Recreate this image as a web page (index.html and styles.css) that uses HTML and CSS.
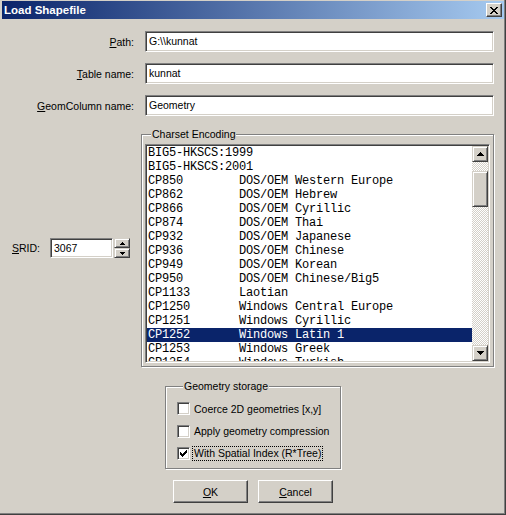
FILE: index.html
```html
<!DOCTYPE html>
<html>
<head>
<meta charset="utf-8">
<link rel="stylesheet" href="styles.css">
</head>
<body>
<div class="window">
  <div class="titlebar">
    <span class="title">Load Shapefile</span>
    <div class="close">
      <svg width="8" height="7" viewBox="0 0 8 7" shape-rendering="crispEdges"><path d="M0 0h2v1H0zM6 0h2v1H6zM1 1h2v1H1zM5 1h2v1H5zM2 2h4v1H2zM3 3h2v1H3zM2 4h4v1H2zM1 5h2v1H1zM5 5h2v1H5zM0 6h2v1H0zM6 6h2v1H6z" fill="#000"/></svg>
    </div>
  </div>

  <div class="fields">
    <div class="field"><span class="lbl"><u>P</u>ath:</span><div class="textbox">G:\\kunnat</div></div>
    <div class="field"><span class="lbl"><u>T</u>able name:</span><div class="textbox">kunnat</div></div>
    <div class="field"><span class="lbl"><u>G</u>eomColumn name:</span><div class="textbox">Geometry</div></div>
  </div>

  <div class="middle">
    <div class="srid">
      <span class="srid-lbl"><u>S</u>RID:</span>
      <div class="textbox srid-box">3067</div>
      <div class="spin">
        <div class="bevel spin-btn"><svg width="5" height="3" viewBox="0 0 5 3" shape-rendering="crispEdges"><path d="M2 0h1v1H2zM1 1h3v1H1zM0 2h5v1H0z"/></svg></div>
        <div class="bevel spin-btn"><svg width="5" height="3" viewBox="0 0 5 3" shape-rendering="crispEdges"><path d="M0 0h5v1H0zM1 1h3v1H1zM2 2h1v1H2z"/></svg></div>
      </div>
    </div>

    <div class="group charset">
      <div class="group-title">Charset Encoding</div>
      <div class="listbox">
        <div class="items">
          <div class="item">BIG5-HKSCS:1999</div>
          <div class="item">BIG5-HKSCS:2001</div>
          <div class="item">CP850        DOS/OEM Western Europe</div>
          <div class="item">CP862        DOS/OEM Hebrew</div>
          <div class="item">CP866        DOS/OEM Cyrillic</div>
          <div class="item">CP874        DOS/OEM Thai</div>
          <div class="item">CP932        DOS/OEM Japanese</div>
          <div class="item">CP936        DOS/OEM Chinese</div>
          <div class="item">CP949        DOS/OEM Korean</div>
          <div class="item">CP950        DOS/OEM Chinese/Big5</div>
          <div class="item">CP1133       Laotian</div>
          <div class="item">CP1250       Windows Central Europe</div>
          <div class="item">CP1251       Windows Cyrillic</div>
          <div class="item sel">CP1252       Windows Latin 1</div>
          <div class="item">CP1253       Windows Greek</div>
          <div class="item">CP1254       Windows Turkish</div>
        </div>
        <div class="vscroll">
          <div class="bevel sb-btn"><svg width="7" height="4" viewBox="0 0 7 4" shape-rendering="crispEdges"><path d="M3 0h1v1H3zM2 1h3v1H2zM1 2h5v1H1zM0 3h7v1H0z"/></svg></div>
          <div class="track"><div class="bevel thumb"></div></div>
          <div class="bevel sb-btn"><svg width="7" height="4" viewBox="0 0 7 4" shape-rendering="crispEdges"><path d="M0 0h7v1H0zM1 1h5v1H1zM2 2h3v1H2zM3 3h1v1H3z"/></svg></div>
        </div>
      </div>
    </div>
  </div>

  <div class="group storage">
    <div class="group-title">Geometry storage</div>
    <div class="checks">
      <div class="check"><div class="cbox"></div><span class="cl">Coerce 2D geometries [x,y]</span></div>
      <div class="check"><div class="cbox"></div><span class="cl">Apply geometry compression</span></div>
      <div class="check"><div class="cbox"><svg width="7" height="7" viewBox="0 0 7 7" shape-rendering="crispEdges"><path d="M0 2h1v3H0zM1 3h1v3H1zM2 4h1v3H2zM3 3h1v3H3zM4 2h1v3H4zM5 1h1v3H5zM6 0h1v3H6z"/></svg></div><span class="cl focus">With Spatial Index (R*Tree)</span></div>
    </div>
  </div>

  <div class="buttons">
    <div class="btn"><u>O</u>K</div>
    <div class="btn"><u>C</u>ancel</div>
  </div>
</div>
</body>
</html>
```

FILE: styles.css
```css
* { box-sizing: border-box; }
html, body { margin: 0; padding: 0; }
body {
  width: 506px;
  height: 515px;
  overflow: hidden;
  background: #d4d0c8;
  font-family: "Liberation Sans", Arial, sans-serif;
  font-size: 10.5px;
  color: #000;
}
u { text-decoration: underline; text-underline-offset: 1px; }

.window {
  width: 506px;
  height: 515px;
  padding: 1px 2px 0;
  display: flex;
  flex-direction: column;
  box-shadow: inset -1px -1px #404040, inset -2px -2px #808080;
}

.titlebar {
  height: 18px;
  flex: none;
  display: flex;
  align-items: center;
  justify-content: space-between;
  padding: 0 2px 0 2px;
  background: linear-gradient(to right, #0a246a, #a6caf0);
}
.title {
  color: #fff;
  font-weight: bold;
  font-size: 11.5px;
  line-height: 18px;
}
.close {
  width: 16px;
  height: 14px;
  background: #d4d0c8;
  border: 1px solid;
  border-color: #fff #404040 #404040 #fff;
  box-shadow: inset -1px -1px #808080;
  display: flex;
  align-items: center;
  justify-content: center;
}

.fields {
  display: flex;
  flex-direction: column;
  gap: 11px;
  margin-top: 12px;
}
.field {
  display: flex;
  align-items: center;
  height: 21px;
}
.lbl {
  width: 132px;
  margin-right: 11px;
  text-align: right;
}
.textbox {
  width: 349px;
  height: 21px;
  background: #fff;
  border: 1px solid;
  border-color: #808080 #fff #fff #808080;
  box-shadow: inset 1px 1px #404040, inset -1px -1px #d4d0c8;
  padding: 0 3px;
  line-height: 19px;
  white-space: pre;
}

.middle {
  display: flex;
  align-items: center;
  margin-top: 18px;
  padding-left: 10px;
}
.srid {
  display: flex;
  align-items: center;
  width: 118px;
  margin-right: 11px;
  margin-bottom: 5px;
}
.srid-lbl { width: 38px; }
.srid-box {
  width: 63px;
  height: 20px;
  line-height: 18px;
}
.spin {
  display: flex;
  flex-direction: column;
  margin-left: 1px;
}

.bevel {
  background: #d4d0c8;
  border: 1px solid;
  border-color: #d4d0c8 #404040 #404040 #d4d0c8;
  box-shadow: inset 1px 1px #fff, inset -1px -1px #808080;
  display: flex;
  align-items: center;
  justify-content: center;
}
.spin-btn { width: 16px; height: 10px; }

.group {
  border: 1px solid #808080;
  box-shadow: inset 1px 1px #fff, 1px 1px #fff;
  display: flex;
  flex-direction: column;
  align-items: flex-start;
}
.group-title {
  margin-top: -7px;
  margin-left: 6px;
  padding: 0 1px;
  background: #d4d0c8;
  line-height: 13px;
}

.charset {
  width: 353px;
  height: 233px;
  padding: 0 3px 3px;
}
.listbox {
  display: flex;
  width: 345px;
  height: 219px;
  margin-top: 3px;
  padding: 1px;
  background: #fff;
  border: 1px solid;
  border-color: #808080 #fff #fff #808080;
  box-shadow: inset 1px 1px #404040, inset -1px -1px #d4d0c8;
}
.items {
  flex: 1;
  overflow: hidden;
  font-family: "Liberation Mono", "Courier New", monospace;
  font-size: 12px;
  letter-spacing: -0.2px;
}
.item {
  height: 14px;
  line-height: 14px;
  padding-left: 1px;
  white-space: pre;
}
.item.sel {
  background: #0a246a;
  color: #fff;
}
.vscroll {
  width: 16px;
  flex: none;
  display: flex;
  flex-direction: column;
  background: repeating-conic-gradient(#d4d0c8 0 25%, #fff 0 50%) 0 0 / 2px 2px;
}
.sb-btn { height: 16px; flex: none; }
.track { flex: 1; }
.thumb { height: 36px; margin-top: 9px; }

.storage {
  width: 176px;
  margin: 19px auto 0;
  padding: 0 0 8px 11px;
}
.checks {
  display: flex;
  flex-direction: column;
  gap: 9.5px;
  margin-top: 9px;
}
.check {
  display: flex;
  align-items: center;
  height: 13px;
}
.cbox {
  width: 13px;
  height: 13px;
  flex: none;
  background: #fff;
  border: 1px solid;
  border-color: #808080 #fff #fff #808080;
  box-shadow: inset 1px 1px #404040, inset -1px -1px #d4d0c8;
  display: flex;
  align-items: center;
  justify-content: center;
}
.cl {
  margin-left: 4px;
  white-space: nowrap;
}
.cl.focus {
  margin-left: 2px;
  padding: 0 1px;
  border: 1px dotted #000;
  line-height: 13px;
}

.buttons {
  display: flex;
  justify-content: center;
  gap: 10px;
  margin-top: 11px;
}
.btn {
  width: 75px;
  height: 23px;
  background: #d4d0c8;
  border: 1px solid;
  border-color: #fff #404040 #404040 #fff;
  box-shadow: inset -1px -1px #808080;
  display: flex;
  align-items: center;
  justify-content: center;
}
```
